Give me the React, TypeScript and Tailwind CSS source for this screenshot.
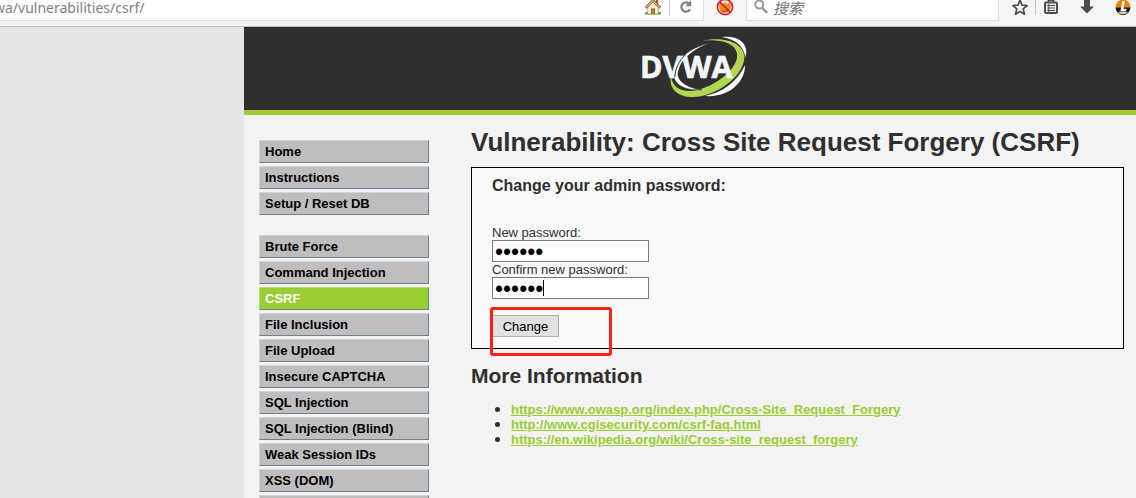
import { useState } from "react";

const general = ["Home", "Instructions", "Setup / Reset DB"];
const modules = [
  "Brute Force",
  "Command Injection",
  "CSRF",
  "File Inclusion",
  "File Upload",
  "Insecure CAPTCHA",
  "SQL Injection",
  "SQL Injection (Blind)",
  "Weak Session IDs",
  "XSS (DOM)",
  "",
];
const references = [
  "https://www.owasp.org/index.php/Cross-Site_Request_Forgery",
  "http://www.cgisecurity.com/csrf-faq.html",
  "https://en.wikipedia.org/wiki/Cross-site_request_forgery",
];

function HomeIcon() {
  return (
    <svg className="block h-4 w-4" viewBox="0 0 16 16">
      <rect x="0" y="12" width="16" height="2.6" rx="1" fill="#4f9d55" />
      <rect x="11" y="0" width="2.2" height="5" fill="#a0602f" />
      <path d="M2.7 7.5 8 1.8l5.3 5.7V14H2.7z" fill="#fbefd4" stroke="#b08a52" strokeWidth=".7" />
      <path d="M.7 7.8 8 .5l7.3 7.3" fill="none" stroke="#6d4b28" strokeWidth="2.4" />
      <path d="M1 7.5 8 .8l7 6.7" fill="none" stroke="#eab765" strokeWidth="1.3" />
      <rect x="6.2" y="8.5" width="3.6" height="5.5" fill="#5f4428" />
      <rect x="7" y="9.3" width="2" height="4.7" fill="#b98a50" />
    </svg>
  );
}

function ReloadIcon() {
  return (
    <svg className="block h-3.5 w-3.5" viewBox="0 0 14 14">
      <path d="M9.8 3.4A4.6 4.6 0 1 0 11 9.4" fill="none" stroke="#808080" strokeWidth="2.2" />
      <path d="M12.2 0v6.2H6.4z" fill="#808080" />
    </svg>
  );
}

function BlockedIcon() {
  return (
    <svg className="block h-4 w-[18px]" viewBox="0 2 18 16">
      <circle cx="9" cy="9" r="7.5" fill="#f3e4dc" />
      <path d="M3 8 5 5l2 1 2-2 2 2 3-2 1 3v3l-3 4-5 1-3-2z" fill="#e88f1c" />
      <path d="M5 11q3 3 8 0l-1 3H7z" fill="#9b5a18" />
      <circle cx="9" cy="9" r="7.6" fill="none" stroke="#d8202a" strokeWidth="1.6" />
      <path d="m3.6 3.8 10.8 10.4" stroke="#d8202a" strokeWidth="1.6" />
    </svg>
  );
}

function SearchIcon() {
  return (
    <svg className="block h-3.5 w-3.5 shrink-0" viewBox="0 0 14 14">
      <circle cx="5.3" cy="4.6" r="4" fill="none" stroke="#989898" strokeWidth="2" />
      <path d="m8.2 7.8 5 5" stroke="#989898" strokeWidth="2.6" />
    </svg>
  );
}

function StarIcon() {
  return (
    <svg className="block h-4 w-4" viewBox="0 0 16 16">
      <path
        d="m8 .2 2 4.9 5.2.4-4 3.4 1.3 5.3L8 11.4l-4.5 2.8 1.3-5.3L.8 5.5 6 5.1z"
        fill="none"
        stroke="#4c4c4c"
        strokeWidth="1.7"
        strokeLinejoin="round"
      />
    </svg>
  );
}

function ClipboardIcon() {
  return (
    <svg className="block h-4 w-3.5" viewBox="0 0 14 16">
      <path d="M4.5 2V0h5v2" fill="none" stroke="#4c4c4c" strokeWidth="1.8" />
      <rect x="1" y="2.4" width="12" height="10.6" rx="1.2" fill="none" stroke="#4c4c4c" strokeWidth="2" />
      <path d="M3 5.5h8M3 8h8M3 10.5h8" stroke="#4c4c4c" strokeWidth="1" />
      <path d="M4.8 4v8" stroke="#4c4c4c" strokeWidth="1" />
    </svg>
  );
}

function DownloadIcon() {
  return (
    <svg className="block h-4 w-3.5" viewBox="0 0 14 16">
      <path d="M4 0h6v6.4h4l-7 7.2L0 6.4h4z" fill="#4c4c4c" />
    </svg>
  );
}

function AddonIcon() {
  return (
    <svg className="block h-4 w-4" viewBox="0 1 16 16">
      <circle cx="8" cy="8" r="7.4" fill="#e8840f" />
      <path d="M.6 8.6a7.4 7.4 0 0 0 14.8 0z" fill="#1a1512" />
      <path d="M3 13.2a7.2 7.2 0 0 0 10 0q-5-2-10 0z" fill="#c9c9c9" />
      <path d="M7.5 2h2.4L8.3 9.8h3.2l-.5 2.2H5.4z" fill="#fff" />
    </svg>
  );
}

function Logo() {
  return (
    <svg className="block h-[62px] w-[108px]" viewBox="60 36 324 186" role="img" aria-label="DVWA">
      <path d="M306 39C350 35 378 52 379 84L377 101C370 67 350 47 306 39Z" fill="#fff" />
      <path d="M375 124C376 170 332 222 254 216C310 206 352 172 375 124Z" fill="#fff" />
      <path
        d="M246 50C310 36 374 54 373 102C370 160 282 222 212 219C170 217 146 192 153 156C158 195 192 210 240 196C300 178 356 128 351 90C347 57 302 45 246 50Z"
        fill="#b0d652"
      />
      <path
        d="M270 57C205 70 162 114 161 152C162 184 198 201 246 197C206 193 174 174 174 150C176 113 216 76 270 57Z"
        fill="#fff"
        stroke="#2f2f2f"
        strokeWidth="2"
      />
      <text
        x="60"
        y="162"
        fontFamily="'Open Sans', sans-serif"
        fontWeight="700"
        fontSize="91"
        fill="#f4f6fb"
        stroke="#f4f6fb"
        strokeWidth="2"
      >
        DVWA
      </text>
      <path d="M196 92C176 112 166 134 164 160" fill="none" stroke="#2f2f2f" strokeWidth="3" />
    </svg>
  );
}

function MenuGroup({ items }: { items: string[] }) {
  return (
    <ul className="flex flex-col gap-[3px]">
      {items.map((item) => (
        <li key={item}>
          <a
            href="#"
            className={
              item === "CSRF"
                ? "block h-[23px] border border-t-[#b4dc6c] border-r-[#708090] border-b-[#708090] border-l-[#b4dc6c] bg-[#9acd32] pl-[5px] text-[13px] leading-[21px] font-bold text-white"
                : "block h-[23px] border border-t-[#d3d3d3] border-r-[#708090] border-b-[#708090] border-l-[#d3d3d3] bg-[#bebebe] pl-[5px] text-[13px] leading-[21px] font-bold text-black"
            }
          >
            {item}
          </a>
        </li>
      ))}
    </ul>
  );
}

export default function App() {
  const [password, setPassword] = useState("secret");
  const [confirmation, setConfirmation] = useState("secret");

  return (
    <div className="flex h-screen flex-col overflow-hidden bg-[#e6e6e6] font-['Liberation_Sans',Arial,sans-serif] text-[#2f2f2f]">
      <div className="flex h-[27px] shrink-0 items-start border-b border-[#bbbbbb] bg-[#f5f5f5]">
        <div className="flex h-[21px] min-w-0 flex-1 items-start border-r border-b border-[#dedede] bg-white">
          <input
            aria-label="Address"
            defaultValue="wa/vulnerabilities/csrf/"
            className="-ml-[6px] h-4 min-w-0 flex-1 bg-transparent font-['Noto_Sans',sans-serif] text-[14px] leading-4 text-[#808080] outline-none"
          />
          <button aria-label="Home" className="mr-2"><HomeIcon /></button>
          <span className="h-4 w-px bg-[#c8c8c8]" />
          <button aria-label="Reload" className="mr-[10px] ml-[9px]"><ReloadIcon /></button>
        </div>
        <button aria-label="Blocked" className="mx-3"><BlockedIcon /></button>
        <div className="flex h-[21px] w-[253px] items-start gap-[5px] border-r border-b border-l border-[#dedede] bg-white pl-[7px]">
          <SearchIcon />
          <input
            aria-label="搜索"
            placeholder="搜索"
            className="h-4 min-w-0 flex-1 bg-transparent font-['Noto_Sans_CJK_SC',sans-serif] text-[15px] leading-4 italic outline-none placeholder:text-[#707070]"
          />
        </div>
        <div className="flex w-[137px] shrink-0 items-start pl-[13px]">
          <button aria-label="Bookmark"><StarIcon /></button>
          <span className="mr-2 ml-[7px] h-[15px] w-px bg-[#c0c0c0]" />
          <button aria-label="Bookmarks list"><ClipboardIcon /></button>
          <button aria-label="Downloads" className="ml-[22px]"><DownloadIcon /></button>
          <button aria-label="Add-on" className="ml-[21px]"><AddonIcon /></button>
        </div>
      </div>

      <div className="ml-[244px] min-h-0 flex-1 bg-[#f3f3f3]">
        <header className="flex h-[88px] justify-center border-b-[5px] border-[#9fcc2e] bg-[#2f2f2f] pt-[9px] pl-2">
          <Logo />
        </header>

        <div className="flex items-start">
          <nav className="ml-[15px] flex w-[170px] shrink-0 flex-col gap-5 pt-[25px]">
            <MenuGroup items={general} />
            <MenuGroup items={modules} />
          </nav>

          <main className="mr-3 ml-[42px] min-w-0 flex-1 pt-3">
            <h1 className="text-[26px] leading-[30px] font-bold">
              Vulnerability: Cross Site Request Forgery (CSRF)
            </h1>

            <section className="mt-[10px] border border-black bg-[#f8faf9] px-5 pt-2 pb-[11px]">
              <h2 className="text-[16px] leading-5 font-bold">Change your admin password:</h2>
              <form
                className="mt-[29px] flex flex-col items-start text-[13px] leading-[15px]"
                onSubmit={(event) => event.preventDefault()}
              >
                <label htmlFor="new-password" className="h-[15px]">New password:</label>
                <input
                  id="new-password"
                  type="password"
                  value={password}
                  onChange={(event) => setPassword(event.target.value)}
                  className="h-[22px] w-[157px] border border-[#7a7a7a] bg-white pt-0.5 pl-0.5 text-[23px] text-black outline-none"
                />
                <label htmlFor="confirm-password" className="h-[15px]">Confirm new password:</label>
                <div className="flex h-[22px] w-[157px] items-center border border-[#7a7a7a] bg-white">
                  <input
                    id="confirm-password"
                    type="password"
                    value={confirmation}
                    onChange={(event) => setConfirmation(event.target.value)}
                    className="h-5 w-[50px] bg-transparent pt-0.5 pl-0.5 text-[23px] text-black outline-none"
                  />
                  <span className="h-4 w-px bg-black" />
                </div>
                <div className="relative mt-4">
                  <button
                    type="submit"
                    className="block h-[22px] w-[67px] border border-[#adadad] bg-[#e1e1e1] text-[13px] text-black"
                  >
                    Change
                  </button>
                  <span className="pointer-events-none absolute -top-2 -left-0.5 h-[49px] w-[122px] rounded-[3px] border-[3px] border-[#ff2015]" />
                </div>
              </form>
            </section>

            <h2 className="mt-[15px] text-[21px] leading-6 font-bold">More Information</h2>
            <ul className="mt-[13px] list-disc pl-10 text-[13px] leading-[15px] marker:text-[16px]">
              {references.map((reference) => (
                <li key={reference} className="h-[15px]">
                  <a href={reference} className="font-bold text-[#9acd32] underline">
                    {reference}
                  </a>
                </li>
              ))}
            </ul>
          </main>
        </div>
      </div>
    </div>
  );
}
